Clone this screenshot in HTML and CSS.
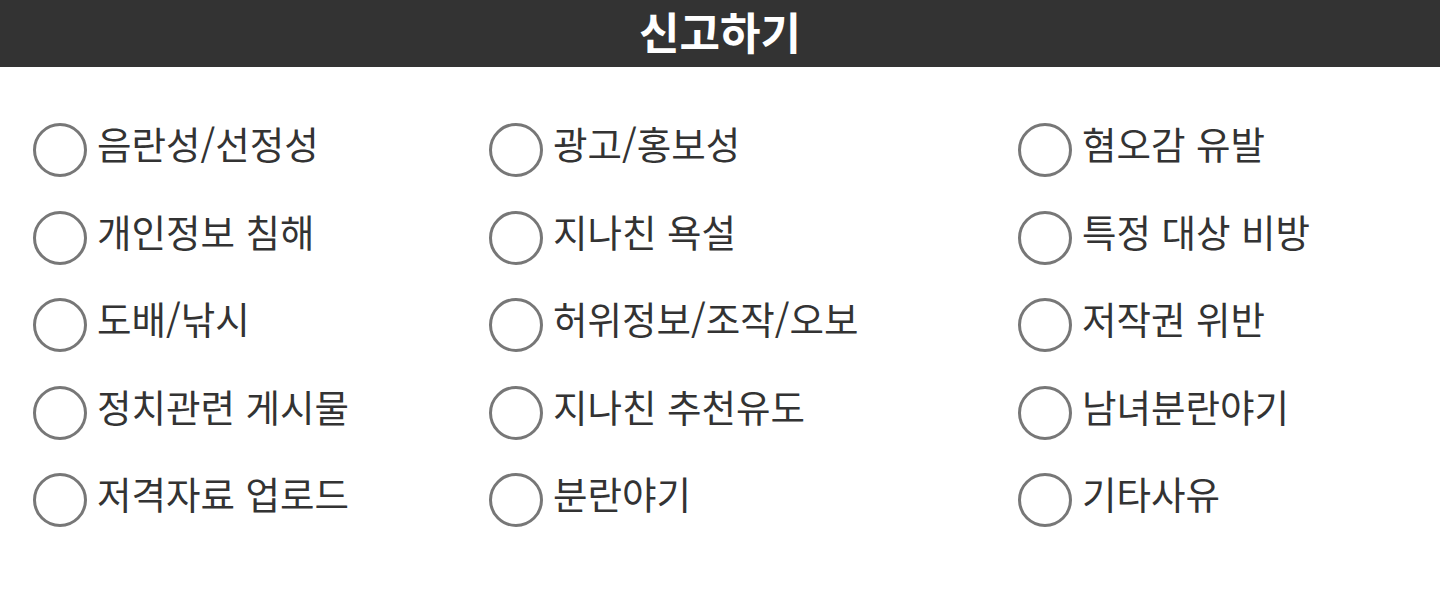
FILE: index.html
```html
<!DOCTYPE html>
<html lang="ko">
<head>
<meta charset="utf-8">
<title>신고하기</title>
<link rel="stylesheet" href="styles.css">
</head>
<body>
<header class="top-bar"><h1 class="title">신고하기</h1></header>
<main class="options">
  <label class="option"><span class="radio"></span><span class="label">음란성/선정성</span></label>
  <label class="option"><span class="radio"></span><span class="label">광고/홍보성</span></label>
  <label class="option"><span class="radio"></span><span class="label">혐오감 유발</span></label>
  <label class="option"><span class="radio"></span><span class="label">개인정보 침해</span></label>
  <label class="option"><span class="radio"></span><span class="label">지나친 욕설</span></label>
  <label class="option"><span class="radio"></span><span class="label">특정 대상 비방</span></label>
  <label class="option"><span class="radio"></span><span class="label">도배/낚시</span></label>
  <label class="option"><span class="radio"></span><span class="label">허위정보/조작/오보</span></label>
  <label class="option"><span class="radio"></span><span class="label">저작권 위반</span></label>
  <label class="option"><span class="radio"></span><span class="label">정치관련 게시물</span></label>
  <label class="option"><span class="radio"></span><span class="label">지나친 추천유도</span></label>
  <label class="option"><span class="radio"></span><span class="label">남녀분란야기</span></label>
  <label class="option"><span class="radio"></span><span class="label">저격자료 업로드</span></label>
  <label class="option"><span class="radio"></span><span class="label">분란야기</span></label>
  <label class="option"><span class="radio"></span><span class="label">기타사유</span></label>
</main>
</body>
</html>
```
FILE: styles.css
```css
* { box-sizing: border-box; }
html, body { margin: 0; padding: 0; background: #fff; }
body { font-family: "Noto Sans CJK KR", "Noto Sans", sans-serif; color: #333; }
.top-bar {
  height: 67px;
  background: #333;
  display: flex;
  align-items: center;
  justify-content: center;
}
.title {
  margin: 0;
  color: #fff;
  font-size: 44px;
  font-weight: 700;
  line-height: 1;
  padding-bottom: 6px;
}
.options {
  display: grid;
  grid-template-columns: 456px 529px 1fr;
  row-gap: 33.5px;
  padding: 56px 0 0 33px;
}
.option {
  display: flex;
  align-items: flex-start;
  gap: 10px;
}
.radio {
  flex: none;
  width: 54px;
  height: 54px;
  border: 3px solid #777;
  border-radius: 50%;
}
.label {
  font-size: 37.5px;
  line-height: 40px;
  white-space: nowrap;
}
```
